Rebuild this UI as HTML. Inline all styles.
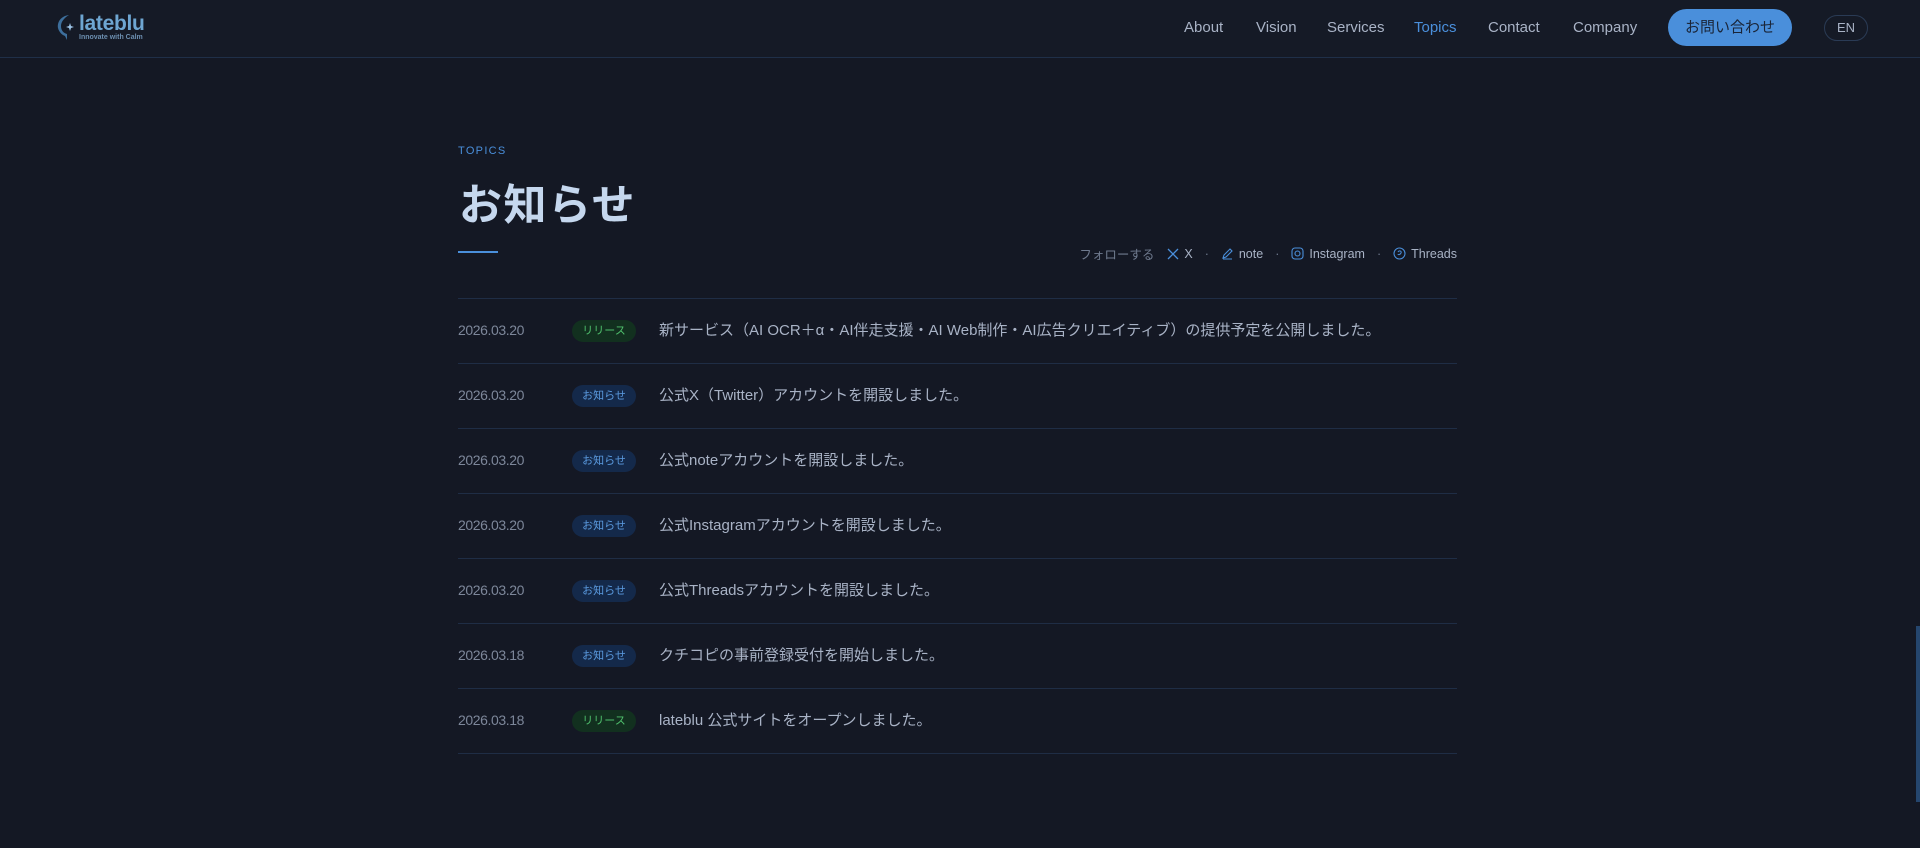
<!DOCTYPE html>
<html><head><meta charset="utf-8"><style>
*{margin:0;padding:0;box-sizing:border-box}
body{width:1920px;height:848px;overflow:hidden;background:#141824;font-family:"Liberation Sans","Noto Sans CJK JP",sans-serif;color:#a9b3c6;position:relative}
.nav{position:absolute;left:0;top:0;width:1920px;height:58px;border-bottom:1px solid #1f2f48;background:#151a26}
.nav a{position:absolute;top:19px;font-size:15px;color:#a9b3c6;text-decoration:none}
.btn{position:absolute;left:1668px;top:9px;width:124px;height:37px;border-radius:19px;background:#4a8fdb;color:#1a2538;font-size:15px;text-align:center;line-height:37px}
.en{position:absolute;left:1824px;top:15px;width:44px;height:26px;border:1px solid #2a3b55;border-radius:13px;font-size:13px;text-align:center;line-height:24px;color:#a9b3c6}
.abs{position:absolute}
.row{position:absolute;left:458px;width:999px;height:65px;border-top:1px solid #1f2d45}
.date{position:absolute;left:0;top:23px;font-size:14px;color:#7d879a;letter-spacing:-.4px}
.badge{position:absolute;left:114px;top:21px;width:64px;height:22px;border-radius:11px;font-size:11px;text-align:center;line-height:22px}
.rel{background:#12301f;color:#4fbf6c}
.inf{background:#14294a;color:#5b9be0}
.txt{position:absolute;left:201px;top:20px;font-size:15px;color:#a9b3c6}
</style></head><body>
<div class="nav">
 <svg class="abs" style="left:55px;top:13px" width="22" height="28" viewBox="0 0 22 28"><path d="M14 2C6 3 2 9 3 15c1 4 4 7 7 8l2 4 0-6c-4-1-6-4-6-8 0-4 3-8 8-11z" fill="#3d6f9c"/><path d="M15 10l1 3 3 1-3 1-1 3-1-3-3-1 3-1z" fill="#9cc3e6"/></svg>
 <div class="abs" style="left:79px;top:12px;font-size:21px;font-weight:bold;color:#6ea6d2;letter-spacing:-.3px">lateblu</div>
 <div class="abs" style="left:79px;top:34px;font-size:7px;color:#6c8fb0;font-weight:bold">Innovate with Calm</div>
 <a style="left:1184px">About</a><a style="left:1256px">Vision</a><a style="left:1327px">Services</a><a style="left:1414px;color:#4a8fdb">Topics</a><a style="left:1488px">Contact</a><a style="left:1573px">Company</a>
 <div class="btn">お問い合わせ</div><div class="en">EN</div>
</div>
<div class="abs" style="left:458px;top:145px;font-size:11px;letter-spacing:1.3px;color:#4a8fdb">TOPICS</div>
<div class="abs" style="left:459px;top:171px;font-size:43px;font-weight:bold;letter-spacing:1.5px;color:#c5d7ee">お知らせ</div>
<div class="abs" style="left:458px;top:251px;width:40px;height:2px;background:#4a8fdb"></div>
<div class="abs" style="right:463px;top:244px;font-size:12.5px;color:#6f7a8e;white-space:nowrap;display:flex;align-items:center;gap:0">
 <span>フォローする</span>
 <svg style="margin-left:13px" width="12" height="12" viewBox="0 0 12 12"><path d="M1 1l10 10M11 1L1 11" stroke="#4a8fdb" stroke-width="1.3"/></svg><span style="margin-left:5px;color:#a9b3c6">X</span>
 <span style="margin:0 12px">·</span>
 <svg width="13" height="13" viewBox="0 0 13 13"><path d="M2 11l1-3 6-6 2 2-6 6z M2 12h9" stroke="#4a8fdb" stroke-width="1.1" fill="none"/></svg><span style="margin-left:5px;color:#a9b3c6">note</span>
 <span style="margin:0 12px">·</span>
 <svg width="13" height="13" viewBox="0 0 13 13"><rect x="1" y="1" width="11" height="11" rx="3" stroke="#4a8fdb" fill="none" stroke-width="1.1"/><circle cx="6.5" cy="6.5" r="2.5" stroke="#4a8fdb" fill="none" stroke-width="1.1"/></svg><span style="margin-left:5px;color:#a9b3c6">Instagram</span>
 <span style="margin:0 12px">·</span>
 <svg width="13" height="13" viewBox="0 0 13 13"><circle cx="6.5" cy="6.5" r="5.5" stroke="#4a8fdb" fill="none" stroke-width="1.1"/><path d="M5 5c1-2 4-1 3 1-1 2-3 2-3 1" stroke="#4a8fdb" fill="none"/></svg><span style="margin-left:5px;color:#a9b3c6">Threads</span>
</div>
<div class="row" style="top:298px"><div class="date">2026.03.20</div><div class="badge rel">リリース</div><div class="txt">新サービス（AI OCR＋α・AI伴走支援・AI Web制作・AI広告クリエイティブ）の提供予定を公開しました。</div></div>
<div class="row" style="top:363px"><div class="date">2026.03.20</div><div class="badge inf">お知らせ</div><div class="txt">公式X（Twitter）アカウントを開設しました。</div></div>
<div class="row" style="top:428px"><div class="date">2026.03.20</div><div class="badge inf">お知らせ</div><div class="txt">公式noteアカウントを開設しました。</div></div>
<div class="row" style="top:493px"><div class="date">2026.03.20</div><div class="badge inf">お知らせ</div><div class="txt">公式Instagramアカウントを開設しました。</div></div>
<div class="row" style="top:558px"><div class="date">2026.03.20</div><div class="badge inf">お知らせ</div><div class="txt">公式Threadsアカウントを開設しました。</div></div>
<div class="row" style="top:623px"><div class="date">2026.03.18</div><div class="badge inf">お知らせ</div><div class="txt">クチコピの事前登録受付を開始しました。</div></div>
<div class="row" style="top:688px;height:66px;border-bottom:1px solid #1f2d45"><div class="date">2026.03.18</div><div class="badge rel">リリース</div><div class="txt">lateblu 公式サイトをオープンしました。</div></div>
<div class="abs" style="left:1916px;top:626px;width:4px;height:176px;background:#25466e"></div>
</body></html>
